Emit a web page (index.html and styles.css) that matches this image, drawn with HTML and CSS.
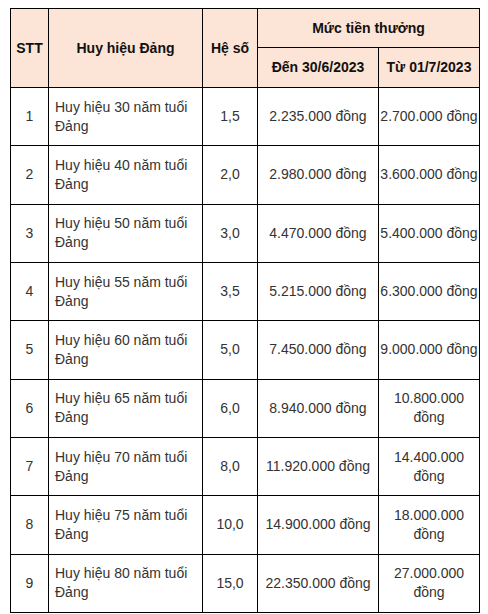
FILE: index.html
```html
<!DOCTYPE html>
<html lang="vi">
<head>
<meta charset="utf-8">
<link rel="stylesheet" href="styles.css">
</head>
<body>
<table class="tbl">
  <colgroup>
    <col class="c1"><col class="c2"><col class="c3"><col class="c4"><col class="c5">
  </colgroup>
  <thead>
    <tr class="h1">
      <th rowspan="2">STT</th>
      <th rowspan="2">Huy hiệu Đảng</th>
      <th rowspan="2">Hệ số</th>
      <th colspan="2">Mức tiền thưởng</th>
    </tr>
    <tr class="h2">
      <th>Đến 30/6/2023</th>
      <th>Từ 01/7/2023</th>
    </tr>
  </thead>
  <tbody>
    <tr><td>1</td><td class="name">Huy hiệu 30 năm tuổi Đảng</td><td>1,5</td><td>2.235.000 đồng</td><td>2.700.000 đồng</td></tr>
    <tr><td>2</td><td class="name">Huy hiệu 40 năm tuổi Đảng</td><td>2,0</td><td>2.980.000 đồng</td><td>3.600.000 đồng</td></tr>
    <tr><td>3</td><td class="name">Huy hiệu 50 năm tuổi Đảng</td><td>3,0</td><td>4.470.000 đồng</td><td>5.400.000 đồng</td></tr>
    <tr><td>4</td><td class="name">Huy hiệu 55 năm tuổi Đảng</td><td>3,5</td><td>5.215.000 đồng</td><td>6.300.000 đồng</td></tr>
    <tr><td>5</td><td class="name">Huy hiệu 60 năm tuổi Đảng</td><td>5,0</td><td>7.450.000 đồng</td><td>9.000.000 đồng</td></tr>
    <tr><td>6</td><td class="name">Huy hiệu 65 năm tuổi Đảng</td><td>6,0</td><td>8.940.000 đồng</td><td>10.800.000 đồng</td></tr>
    <tr><td>7</td><td class="name">Huy hiệu 70 năm tuổi Đảng</td><td>8,0</td><td>11.920.000 đồng</td><td>14.400.000 đồng</td></tr>
    <tr><td>8</td><td class="name">Huy hiệu 75 năm tuổi Đảng</td><td>10,0</td><td>14.900.000 đồng</td><td>18.000.000 đồng</td></tr>
    <tr><td>9</td><td class="name">Huy hiệu 80 năm tuổi Đảng</td><td>15,0</td><td>22.350.000 đồng</td><td>27.000.000 đồng</td></tr>
  </tbody>
</table>
</body>
</html>
```
FILE: styles.css
```css
html, body {
  margin: 0;
  padding: 0;
  background: #fff;
}
body {
  padding: 8px 0 0 10px;
  font-family: "Liberation Sans", Arial, sans-serif;
  font-size: 14px;
  color: #333;
}
.tbl {
  border-collapse: collapse;
  table-layout: fixed;
  width: 469px;
}
.c1 { width: 38px; }
.c2 { width: 154px; }
.c3 { width: 55px; }
.c4 { width: 121px; }
.c5 { width: 101px; }
.tbl th, .tbl td {
  border: 1px solid #000;
  text-align: center;
  vertical-align: middle;
  padding: 0 1px;
  line-height: 19px;
}
.tbl th {
  background: #fce4d6;
  font-weight: bold;
  color: #111;
}
.h1 th { height: 38px; }
.h2 th { height: 39px; }
.tbl td { height: 57.34px; }
.tbl td.name {
  text-align: left;
  padding-left: 6px;
}
```
